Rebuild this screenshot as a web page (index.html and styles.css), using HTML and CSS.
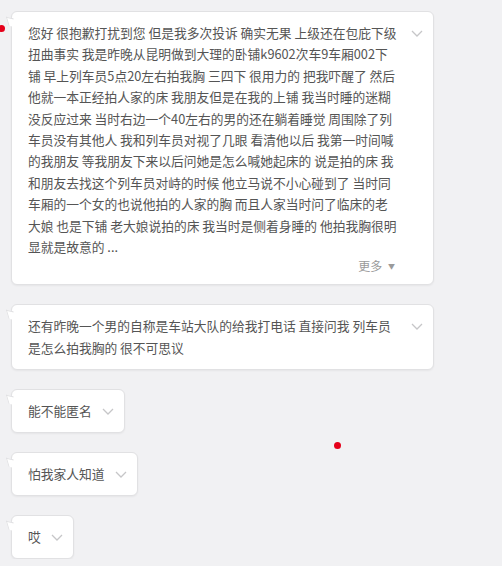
FILE: index.html
```html
<!DOCTYPE html>
<html>
  <head>
    <meta charset="utf-8">
    <title>消息</title>
    <link rel="stylesheet" href="styles.css">
  </head>
  <body>
    <div class="thread">
      <div class="bubble bubble-wide">
        <div class="bubble-body">
          <p class="text text-preview">您好 很抱歉打扰到您 但是我多次投诉 确实无果 上级还在包庇下级<br>扭曲事实 我是昨晚从昆明做到大理的卧铺k9602次车9车厢002下<br>铺 早上列车员5点20左右拍我胸 三四下 很用力的 把我吓醒了 然后<br>他就一本正经拍人家的床 我朋友但是在我的上铺 我当时睡的迷糊<br>没反应过来 当时右边一个40左右的男的还在躺着睡觉 周围除了列<br>车员没有其他人 我和列车员对视了几眼 看清他以后 我第一时间喊<br>的我朋友 等我朋友下来以后问她是怎么喊她起床的 说是拍的床 我<br>和朋友去找这个列车员对峙的时候 他立马说不小心碰到了 当时同<br>车厢的一个女的也说他拍的人家的胸 而且人家当时问了临床的老<br>大娘 也是下铺 老大娘说拍的床 我当时是侧着身睡的 他拍我胸很明<br>显就是故意的 ...</p>
          <div class="more">更多 <span class="caret">▼</span></div>
        </div>
        <svg class="chevron" width="12" height="7" viewBox="0 0 12 7"><polyline points="1,1 6,6 11,1" /></svg>
      </div>

      <div class="bubble bubble-wide">
        <div class="bubble-body">
          <p class="text">还有昨晚一个男的自称是车站大队的给我打电话 直接问我 列车员<br>是怎么拍我胸的 很不可思议</p>
        </div>
        <svg class="chevron" width="12" height="7" viewBox="0 0 12 7"><polyline points="1,1 6,6 11,1" /></svg>
      </div>

      <div class="bubble">
        <p class="text">能不能匿名</p>
        <svg class="chevron" width="12" height="7" viewBox="0 0 12 7"><polyline points="1,1 6,6 11,1" /></svg>
      </div>

      <div class="bubble">
        <p class="text">怕我家人知道</p>
        <svg class="chevron" width="12" height="7" viewBox="0 0 12 7"><polyline points="1,1 6,6 11,1" /></svg>
      </div>

      <div class="bubble">
        <p class="text">哎</p>
        <svg class="chevron" width="12" height="7" viewBox="0 0 12 7"><polyline points="1,1 6,6 11,1" /></svg>
      </div>
    </div>

    <span class="mark mark-top"></span>
    <span class="mark mark-mid"></span>
  </body>
</html>
```

FILE: styles.css
```css
:root {
  --page: #f1f1f3;
  --bubble: #ffffff;
  --border: #e1e1e3;
  --text: #555555;
  --muted: #9a9a9a;
  --icon: #c6c6c8;
}

body {
  margin: 0;
  background-color: var(--page);
  font-family: "Noto Sans CJK SC", "Microsoft YaHei", sans-serif;
  color: var(--text);
}

.thread {
  display: flex;
  flex-direction: column;
  align-items: flex-start;
  gap: 19px;
  padding: 11px 0 0 11px;
}

.bubble {
  position: relative;
  display: flex;
  align-items: flex-start;
  gap: 10px;
  padding: 10px 10px 10px 16px;
  background-color: var(--bubble);
  border: 1px solid var(--border);
  border-radius: 6px;
  box-shadow: 0 1px 2px rgba(0, 0, 0, 0.05);
}

.bubble:before {
  position: absolute;
  content: "";
  left: -5px;
  top: 6px;
  width: 7px;
  height: 7px;
  background-color: var(--bubble);
  border-left: 1px solid var(--border);
  border-top: 1px solid var(--border);
  transform: skewY(30deg) rotate(-20deg);
}

.bubble-wide {
  width: 395px;
}

.bubble-body {
  flex: 1;
}

.text {
  margin: 0;
  font-size: 12.75px;
  line-height: 22px;
  white-space: nowrap;
}

.text-preview {
  line-height: 21.4px;
}

.more {
  margin-top: 1px;
  text-align: right;
  padding-right: 6px;
  font-size: 12px;
  line-height: 16px;
  color: var(--muted);
}

.caret {
  font-size: 7px;
  vertical-align: 2px;
  margin-left: 3px;
}

.chevron {
  flex: none;
  margin-top: 8px;
}

.chevron polyline {
  fill: none;
  stroke: var(--icon);
  stroke-width: 1.3;
}

.mark {
  position: absolute;
  width: 7px;
  height: 7px;
  border-radius: 50%;
  background-color: #e5001a;
}

.mark-top {
  left: -2px;
  top: 25px;
}

.mark-mid {
  left: 334px;
  top: 442px;
}
```
